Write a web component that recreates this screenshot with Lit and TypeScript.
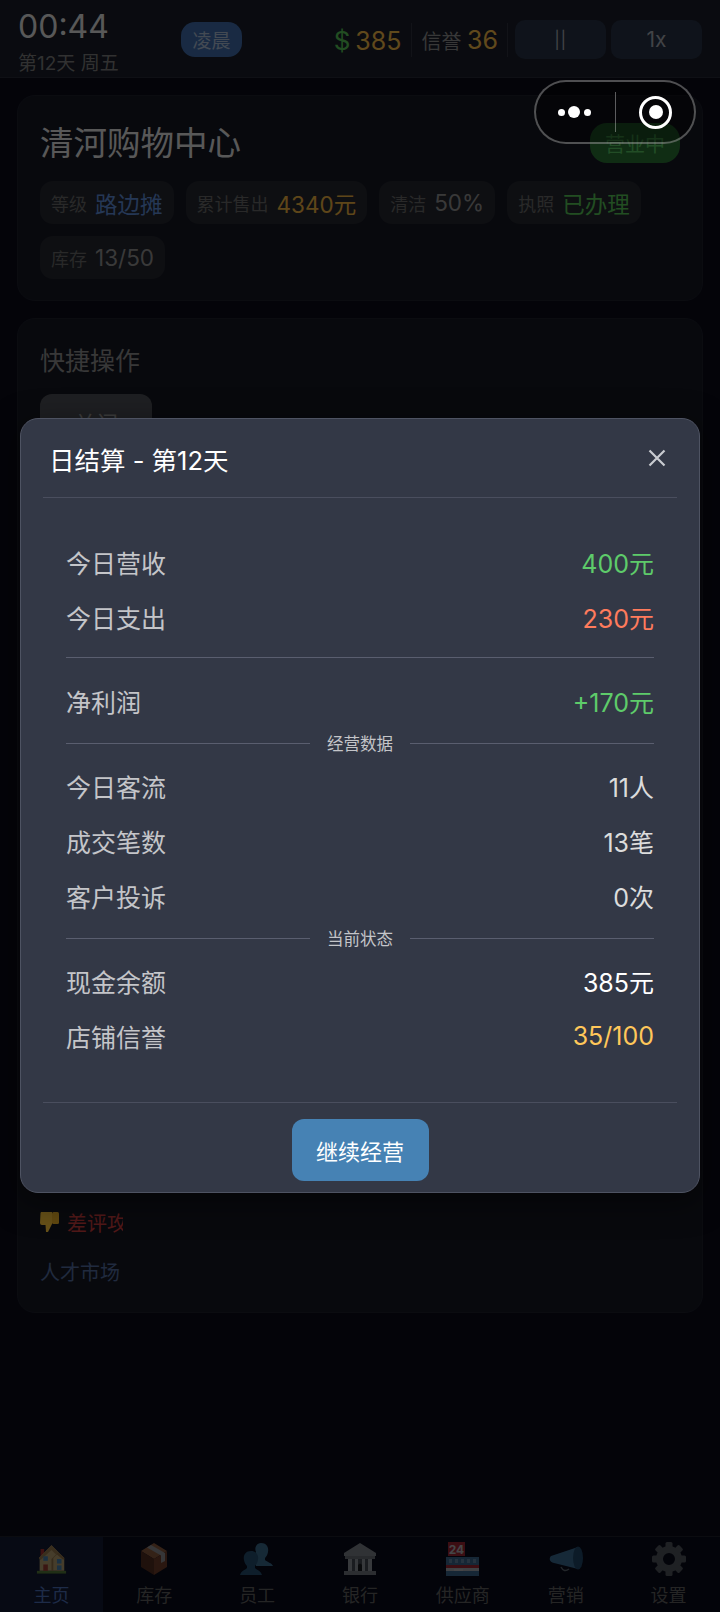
import { css, html, LitElement, svg } from "lit";
import { customElement } from "lit/decorators.js";

const icons: Record<string, unknown> = {
  house: svg`<svg viewBox="0 0 34 34" width="31" height="34">
    <rect x="1" y="30" width="32" height="3" fill="#6b9e3a"/>
    <rect x="5" y="6" width="4" height="8" fill="#d3362d"/>
    <path d="M17 2 L31 16 V30 H4 V15 Z" fill="#f2cf86"/>
    <path d="M17 2 L3 16 L5 18 L17 7 L22 12 L24 9 Z" fill="#c69a55"/>
    <path d="M22 12 L17 17 V30 H19 V16 L23 12 L30 18 L31 16 L24 9 Z" fill="#b98e4c"/>
    <rect x="8" y="14" width="5" height="5" fill="#5fa6d6"/>
    <rect x="23" y="17" width="5" height="5" fill="#5fa6d6"/>
    <rect x="23" y="24" width="5" height="5" fill="#5fa6d6"/>
    <rect x="8" y="23" width="5" height="7" fill="#c8452f"/>
  </svg>`,
  box: svg`<svg viewBox="3 0 28 34" width="28" height="34">
    <path d="M17 1 L30 9 L17 17 L4 9 Z" fill="#b8764a"/>
    <path d="M4 9 L17 17 V33 L4 25 Z" fill="#6e3a22"/>
    <path d="M30 9 L17 17 V33 L30 25 Z" fill="#93512f"/>
    <path d="M10 5.400 L14 3 L28 11 V19 L24 21 V13.400 Z" fill="#bdbdbd"/>
  </svg>`,
  people: svg`<svg viewBox="0 0 34 34" width="34" height="34">
    <path d="M21 1 C27 1 29 6 28 10 C27.600 13 26 15 25 16 V18 C27 20 32 21 33 24 H16 V10 C14 5 17 1 21 1 Z" fill="#4f8fb8"/>
    <path d="M11 9 C17 9 19 14 18 18 C17.600 21 16 23 15 24 V26 C17 28 21 29 22 33 H0 C1 29 5 28 7 26 V24 C6 23 4.400 21 4 18 C3 14 5 9 11 9 Z" fill="#2f6a90"/>
  </svg>`,
  bank: svg`<svg viewBox="0 0 34 34" width="34" height="34">
    <path d="M17 1 L33 11 V14 H1 V11 Z" fill="#aab0b5"/>
    <rect x="2" y="14" width="30" height="3" fill="#8d9398"/>
    <rect x="5" y="17" width="24" height="12" fill="#5d6368"/>
    <rect x="5" y="17" width="4" height="12" fill="#c2c7cb"/>
    <rect x="12" y="17" width="3" height="12" fill="#c2c7cb"/>
    <rect x="19" y="17" width="3" height="12" fill="#c2c7cb"/>
    <rect x="25" y="17" width="4" height="12" fill="#c2c7cb"/>
    <path d="M15 29 V23 Q17 20 19 23 V29 Z" fill="#1f2224"/>
    <rect x="1" y="29" width="32" height="4" fill="#9aa0a5"/>
  </svg>`,
  store: svg`<svg viewBox="0 0 34 34" width="34" height="34">
    <rect x="2" y="0" width="17" height="14" fill="#d32f3a"/>
    <text x="10.500" y="11.500" text-anchor="middle" font-size="12" font-weight="700" font-family="Inter, sans-serif" fill="#f3f3f3">24</text>
    <rect x="0" y="15" width="33" height="19" fill="#dfe3e8"/>
    <rect x="0" y="15" width="33" height="8" fill="#4f88b8"/>
    <rect x="0" y="23" width="33" height="3" fill="#d32f3a"/>
    <rect x="0" y="29" width="33" height="5" fill="#4f88b8"/>
    <rect x="8" y="27" width="9" height="2" fill="#f3f3f3"/>
    ${[3, 9, 15, 21, 27].map((x) => svg`<rect x="${x}" y="17" width="3" height="4" fill="#86b4d8"/>`)}
  </svg>`,
  horn: svg`<svg viewBox="0 0 36 34" width="36" height="34">
    <path d="M13 25 Q16 31 21 27" fill="none" stroke="#7a868d" stroke-width="1.500"/>
    <path d="M3 14 L30 5 V27 L6 21 C1 20 1 16 3 14 Z" fill="#4b8dbd"/>
    <ellipse cx="30" cy="16" rx="5" ry="11.500" fill="#2a5f85"/>
  </svg>`,
  gear: svg`<svg viewBox="0 0 34 34" width="34" height="34">
    <circle cx="17" cy="17" r="9.500" fill="none" stroke="#6e7378" stroke-width="7"/>
    ${[0, 45, 90, 135, 180, 225, 270, 315].map(
      (deg) => svg`<rect x="13.500" y="0" width="7" height="7" rx="1.500" fill="#6e7378" transform="rotate(${deg} 17 17)"/>`,
    )}
  </svg>`,
};

const navItems = [
  { label: "主页", icon: "house", active: true },
  { label: "库存", icon: "box" },
  { label: "员工", icon: "people" },
  { label: "银行", icon: "bank" },
  { label: "供应商", icon: "store" },
  { label: "营销", icon: "horn" },
  { label: "设置", icon: "gear" },
];

@customElement("app-root")
export class AppRoot extends LitElement {
  renderRow(label: string, value: string, cls = "") {
    return html`<div class="row">
      <span class="row-label">${label}</span>
      <span class="row-value ${cls}">${value}</span>
    </div>`;
  }

  renderSection(label: string) {
    return html`<div class="section"><i></i><span>${label}</span><i></i></div>`;
  }

  render() {
    return html`
      <div class="page">
        <header class="top">
          <div class="clock">
            <div class="time">00:44</div>
            <div class="date">第12天 周五</div>
          </div>
          <div class="period">凌晨</div>
          <div class="stats">
            <span class="money"><b>$</b>385</span>
            <span class="rep">信誉 <b>36</b></span>
            <button class="ctl pause">||</button>
            <button class="ctl speed">1x</button>
          </div>
        </header>

        <main class="content">
          <section class="card shop">
            <div class="shop-head">
              <h1>清河购物中心</h1>
              <span class="open">营业中</span>
            </div>
            <div class="tags">
              <span class="tag"><small>等级</small><em class="blue">路边摊</em></span>
              <span class="tag"><small>累计售出</small><em class="gold">4340元</em></span>
              <span class="tag"><small>清洁</small><em>50%</em></span>
              <span class="tag"><small>执照</small><em class="green">已办理</em></span>
              <span class="tag"><small>库存</small><em>13/50</em></span>
            </div>
          </section>

          <section class="card actions">
            <h2>快捷操作</h2>
            <button class="close-shop">关门</button>
            <div class="hidden-list"></div>
            <div class="bad">
              <svg viewBox="0 0 20 22" width="20" height="22">
                <path d="M1 1 H12 V13 L8 21 H6 L5.500 14 H2 Q0 14 0 12 L0.500 2 Z" fill="#ffc83d"/>
                <rect x="12" y="1" width="7" height="12" rx="1.500" fill="#f0b429"/>
              </svg>
              <span class="bad-text">差评攻略</span>
            </div>
            <div class="market">人才市场</div>
          </section>
        </main>

        <nav class="tabs">
          ${navItems.map(
            (n) => html`<div class="tab ${n.active ? "on" : ""}">
              <div class="tab-icon">${icons[n.icon]}</div>
              <span>${n.label}</span>
            </div>`,
          )}
        </nav>
      </div>

      <div class="overlay">
        <div class="modal">
          <div class="modal-head">
            <span>日结算 - 第12天</span>
            <svg viewBox="0 0 18 18" width="18" height="18">
              <path d="M1.500 1.500 L16.500 16.500 M16.500 1.500 L1.500 16.500" stroke="#c9cbd0" stroke-width="2.200" fill="none"/>
            </svg>
          </div>
          <div class="modal-body">
            ${this.renderRow("今日营收", "400元", "up")}
            ${this.renderRow("今日支出", "230元", "down")}
            <div class="rule"></div>
            ${this.renderRow("净利润", "+170元", "up")}
            ${this.renderSection("经营数据")}
            ${this.renderRow("今日客流", "11人")}
            ${this.renderRow("成交笔数", "13笔")}
            ${this.renderRow("客户投诉", "0次")}
            ${this.renderSection("当前状态")}
            ${this.renderRow("现金余额", "385元", "white")}
            ${this.renderRow("店铺信誉", "35/100", "warn")}
          </div>
          <div class="modal-foot">
            <button class="go">继续经营</button>
          </div>
        </div>
      </div>

      <div class="capsule">
        <div class="dots"><i></i><i class="big"></i><i></i></div>
        <div class="target"><i></i></div>
      </div>
    `;
  }

  static styles = css`
    :host {
      display: block;
      position: relative;
      width: 720px;
      height: 1612px;
      overflow: hidden;
      background: #0a0c18;
      font-family: Inter, "Noto Sans CJK SC", sans-serif;
      color: #fff;
    }
    button {
      font: inherit;
      border: none;
      padding: 0;
    }
    .page {
      display: flex;
      flex-direction: column;
      height: 1612px;
    }

    .top {
      height: 77px;
      flex: none;
      display: flex;
      align-items: flex-start;
      padding: 0 18px;
      background: #191d28;
      border-bottom: 1px solid #262a36;
    }
    .clock {
      width: 163px;
      flex: none;
    }
    .time {
      font-size: 32px;
      line-height: 40px;
      margin-top: 7px;
      color: #ddd;
    }
    .date {
      font-size: 19px;
      line-height: 24px;
      margin-top: 5px;
      color: #7c7c7c;
      white-space: nowrap;
    }
    .period {
      margin-top: 22px;
      width: 61px;
      height: 35px;
      border-radius: 14px;
      background: #3f6aa8;
      color: #a8b8d0;
      font-size: 19px;
      display: flex;
      align-items: center;
      justify-content: center;
    }
    .stats {
      margin-left: auto;
      margin-top: 20px;
      display: flex;
      align-items: center;
      height: 39px;
    }
    .money {
      font-size: 25px;
      color: #f0b646;
      padding-right: 10px;
      border-right: 1px solid #2d303c;
      height: 34px;
      line-height: 36px;
    }
    .money b {
      font-weight: 400;
      font-size: 26px;
      color: #55c055;
      margin-right: 5px;
    }
    .rep {
      font-size: 20px;
      color: #8c8c8c;
      padding: 0 9px;
      border-right: 1px solid #2d303c;
      height: 34px;
      line-height: 34px;
    }
    .rep b {
      font-weight: 400;
      font-size: 25px;
      color: #f0b646;
    }
    .ctl {
      width: 91px;
      height: 39px;
      margin-left: 7px;
      border-radius: 10px;
      background: #263044;
      color: #a4a8b0;
      font-size: 22px;
    }
    .pause {
      font-size: 17px;
      letter-spacing: 0.5px;
    }
    .speed {
      margin-left: 5px;
      font-size: 21px;
    }

    .content {
      flex: 1;
      padding: 17px 17px 0;
      display: flex;
      flex-direction: column;
      gap: 17px;
    }
    .card {
      background: #151722;
      border: 1px solid #1c1e2a;
      border-radius: 18px;
      box-sizing: border-box;
    }
    .shop {
      height: 206px;
      padding: 22px 22px 0;
    }
    .shop-head {
      display: flex;
      justify-content: space-between;
      align-items: flex-start;
    }
    h1 {
      margin: 0;
      font-size: 33.500px;
      line-height: 50px;
      font-weight: 400;
      color: #ddd;
    }
    .open {
      margin: 5px 0 0;
      width: 90px;
      height: 40px;
      border-radius: 17px;
      background: #2a7033;
      color: #55c060;
      font-size: 20px;
      display: flex;
      align-items: center;
      justify-content: center;
    }
    .tags {
      display: flex;
      flex-wrap: wrap;
      gap: 12px;
      margin-top: 13px;
    }
    .tag {
      height: 43px;
      padding: 0 11px;
      border-radius: 13px;
      background: #24262e;
      display: flex;
      align-items: center;
      gap: 8px;
    }
    .tag small {
      font-size: 18px;
      color: #666;
    }
    .tag em {
      font-style: normal;
      font-size: 22.500px;
      color: #909090;
    }
    .tag em.blue {
      color: #5d8ad4;
    }
    .tag em.gold {
      color: #ecb040;
    }
    .tag em.green {
      color: #55c055;
    }

    .actions {
      height: 995px;
      padding: 24px 22px 0;
    }
    h2 {
      margin: 0;
      font-size: 25px;
      line-height: 36px;
      font-weight: 400;
      color: #8c8c8c;
    }
    .close-shop {
      display: block;
      margin-top: 15px;
      width: 112px;
      height: 56px;
      border-radius: 12px;
      background: #4d4f55;
      color: #999;
      font-size: 22px;
    }
    .hidden-list {
      height: 757px;
    }
    .bad {
      display: flex;
      align-items: center;
      gap: 7px;
      height: 30px;
    }
    .bad-text {
      width: 56px;
      overflow: hidden;
      white-space: nowrap;
      font-size: 20px;
      color: #c83c3c;
    }
    .market {
      margin-top: 21px;
      font-size: 20px;
      line-height: 30px;
      color: #506a9c;
    }

    .tabs {
      height: 75px;
      flex: none;
      display: grid;
      grid-template-columns: repeat(7, 1fr);
      background: #080a19;
      border-top: 1px solid #1c1f2a;
    }
    .tab {
      display: flex;
      flex-direction: column;
      align-items: center;
      font-size: 18px;
      color: #5e5e5e;
    }
    .tab.on {
      background: #121932;
      color: #4a6cb4;
    }
    .tab-icon {
      height: 34px;
      margin-top: 5px;
      display: flex;
      opacity: 0.7;
    }
    .tab span {
      line-height: 26px;
      margin-top: 7px;
    }

    .overlay {
      position: absolute;
      inset: 0;
      background: rgba(0, 0, 0, 0.6);
      display: flex;
      align-items: center;
      justify-content: center;
    }
    .modal {
      width: 680px;
      height: 775px;
      box-sizing: border-box;
      margin-top: -1px;
      background: #333846;
      border: 1px solid #4e5362;
      border-radius: 18px;
      padding: 0 22px;
      box-shadow: 0 8px 32px rgba(0, 0, 0, 0.5);
      display: flex;
      flex-direction: column;
    }
    .modal-head {
      height: 78px;
      flex: none;
      display: flex;
      align-items: center;
      justify-content: space-between;
      padding: 0 11px 0 6px;
      font-size: 25.500px;
      border-bottom: 1px solid #4a4e5e;
    }
    .modal-body {
      flex: 1;
      padding: 36px 23px 0;
    }
    .row {
      height: 55px;
      display: flex;
      align-items: center;
      justify-content: space-between;
      font-size: 25px;
    }
    .row-label {
      color: #c4c5c9;
    }
    .row-value {
      color: #dcdcdc;
    }
    .row-value.up {
      color: #5ecb6a;
    }
    .row-value.down {
      color: #ff7b5c;
    }
    .row-value.white {
      color: #fff;
    }
    .row-value.warn {
      color: #ffc75a;
    }
    .rule {
      height: 1px;
      margin: 13px 0 15px;
      background: #5a5e6f;
    }
    .section {
      height: 30px;
      display: flex;
      align-items: center;
      gap: 17px;
      font-size: 16.500px;
      color: #c4c5c9;
    }
    .section i {
      flex: 1;
      height: 1px;
      background: #5a5e6f;
    }
    .modal-foot {
      height: 90px;
      flex: none;
      box-sizing: border-box;
      border-top: 1px solid #4a4e5e;
      display: flex;
      justify-content: center;
      padding-top: 16px;
    }
    .go {
      width: 137px;
      height: 62px;
      border-radius: 12px;
      background: #4682b4;
      color: #fff;
      font-size: 22px;
    }

    .capsule {
      position: absolute;
      left: 534px;
      top: 80px;
      width: 162px;
      height: 64px;
      box-sizing: border-box;
      border: 2px solid rgba(255, 255, 255, 0.3);
      border-radius: 32px;
      background: rgba(0, 0, 0, 0.35);
      display: grid;
      grid-template-columns: 80px 1fr;
      align-items: center;
    }
    .dots {
      height: 40px;
      border-right: 1px solid rgba(255, 255, 255, 0.35);
      display: flex;
      align-items: center;
      justify-content: center;
      gap: 3.500px;
      padding-right: 3px;
    }
    .dots i {
      width: 7px;
      height: 7px;
      border-radius: 50%;
      background: #fff;
    }
    .dots i.big {
      width: 12px;
      height: 12px;
    }
    .target {
      width: 33px;
      height: 33px;
      box-sizing: border-box;
      margin-left: 23px;
      border: 3px solid #fff;
      border-radius: 50%;
      display: flex;
      align-items: center;
      justify-content: center;
    }
    .target i {
      width: 14px;
      height: 14px;
      border-radius: 50%;
      background: #fff;
    }
  `;
}
